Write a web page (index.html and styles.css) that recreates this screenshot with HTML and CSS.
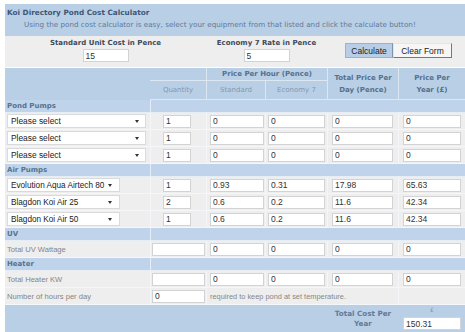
FILE: index.html
```html
<!DOCTYPE html>
<html>
<head>
<meta charset="utf-8">
<link rel="stylesheet" href="styles.css">
</head>
<body>
<div class="wrap">
  <div class="head">
    <div class="title">Koi Directory Pond Cost Calculator</div>
    <div class="sub">Using the pond cost calculator is easy, select your equipment from that listed and click the calculate button!</div>
  </div>
  <div class="rates">
    <div class="rate">
      <div class="rate-label">Standard Unit Cost in Pence</div>
      <input class="inp rate-inp" type="text" value="15">
    </div>
    <div class="rate">
      <div class="rate-label">Economy 7 Rate in Pence</div>
      <input class="inp rate-inp" type="text" value="5">
    </div>
    <div class="btns">
      <button class="btn btn-calc">Calculate</button><button class="btn btn-clear">Clear Form</button>
    </div>
  </div>
  <table class="calc">
    <colgroup>
      <col class="c-label"><col class="c-qty"><col class="c-std"><col class="c-eco"><col class="c-tot"><col class="c-year">
    </colgroup>
    <thead>
      <tr class="h1">
        <th rowspan="2" class="nb-r"></th>
        <th class="nb-l"></th>
        <th colspan="2" class="bold">Price Per Hour (Pence)</th>
        <th rowspan="2" class="bold">Total Price Per<br>Day (Pence)</th>
        <th rowspan="2" class="bold">Price Per<br>Year (£)</th>
      </tr>
      <tr class="h2">
        <th class="thin">Quantity</th>
        <th class="thin">Standard</th>
        <th class="thin">Economy 7</th>
      </tr>
    </thead>
    <tbody>
      <tr class="band"><td>Pond Pumps</td><td colspan="5"></td></tr>
      <tr class="row">
        <td class="lab"><div class="sel sel-wide"><span>Please select</span><i class="arrow"></i></div></td>
        <td class="qty"><input class="inp q" type="text" value="1"></td>
        <td class="std"><input class="inp" type="text" value="0"></td>
        <td class="eco"><input class="inp" type="text" value="0"></td>
        <td class="tot"><input class="inp" type="text" value="0"></td>
        <td class="yr"><input class="inp" type="text" value="0"></td>
      </tr>
      <tr class="row">
        <td class="lab"><div class="sel sel-wide"><span>Please select</span><i class="arrow"></i></div></td>
        <td class="qty"><input class="inp q" type="text" value="1"></td>
        <td class="std"><input class="inp" type="text" value="0"></td>
        <td class="eco"><input class="inp" type="text" value="0"></td>
        <td class="tot"><input class="inp" type="text" value="0"></td>
        <td class="yr"><input class="inp" type="text" value="0"></td>
      </tr>
      <tr class="row">
        <td class="lab"><div class="sel sel-wide"><span>Please select</span><i class="arrow"></i></div></td>
        <td class="qty"><input class="inp q" type="text" value="1"></td>
        <td class="std"><input class="inp" type="text" value="0"></td>
        <td class="eco"><input class="inp" type="text" value="0"></td>
        <td class="tot"><input class="inp" type="text" value="0"></td>
        <td class="yr"><input class="inp" type="text" value="0"></td>
      </tr>
      <tr class="band"><td>Air Pumps</td><td colspan="5"></td></tr>
      <tr class="row">
        <td class="lab"><div class="sel sel-narrow"><span>Evolution Aqua Airtech 80</span><i class="arrow"></i></div></td>
        <td class="qty"><input class="inp q" type="text" value="1"></td>
        <td class="std"><input class="inp" type="text" value="0.93"></td>
        <td class="eco"><input class="inp" type="text" value="0.31"></td>
        <td class="tot"><input class="inp" type="text" value="17.98"></td>
        <td class="yr"><input class="inp" type="text" value="65.63"></td>
      </tr>
      <tr class="row">
        <td class="lab"><div class="sel sel-narrow"><span>Blagdon Koi Air 25</span><i class="arrow"></i></div></td>
        <td class="qty"><input class="inp q" type="text" value="2"></td>
        <td class="std"><input class="inp" type="text" value="0.6"></td>
        <td class="eco"><input class="inp" type="text" value="0.2"></td>
        <td class="tot"><input class="inp" type="text" value="11.6"></td>
        <td class="yr"><input class="inp" type="text" value="42.34"></td>
      </tr>
      <tr class="row">
        <td class="lab"><div class="sel sel-narrow"><span>Blagdon Koi Air 50</span><i class="arrow"></i></div></td>
        <td class="qty"><input class="inp q" type="text" value="1"></td>
        <td class="std"><input class="inp" type="text" value="0.6"></td>
        <td class="eco"><input class="inp" type="text" value="0.2"></td>
        <td class="tot"><input class="inp" type="text" value="11.6"></td>
        <td class="yr"><input class="inp" type="text" value="42.34"></td>
      </tr>
      <tr class="band"><td>UV</td><td colspan="5"></td></tr>
      <tr class="row">
        <td class="lab txt">Total UV Wattage</td>
        <td class="qty wide"><input class="inp qw" type="text" value=""></td>
        <td class="std"><input class="inp" type="text" value="0"></td>
        <td class="eco"><input class="inp" type="text" value="0"></td>
        <td class="tot"><input class="inp" type="text" value="0"></td>
        <td class="yr"><input class="inp" type="text" value="0"></td>
      </tr>
      <tr class="band"><td>Heater</td><td colspan="5"></td></tr>
      <tr class="row">
        <td class="lab txt">Total Heater KW</td>
        <td class="qty wide"><input class="inp qw" type="text" value=""></td>
        <td class="std"><input class="inp" type="text" value="0"></td>
        <td class="eco"><input class="inp" type="text" value="0"></td>
        <td class="tot"><input class="inp" type="text" value="0"></td>
        <td class="yr"><input class="inp" type="text" value="0"></td>
      </tr>
      <tr class="row">
        <td class="lab txt">Number of hours per day</td>
        <td class="qty wide"><input class="inp qw" type="text" value="0"></td>
        <td colspan="3" class="note">required to keep pond at set temperature.</td>
        <td class="yr"></td>
      </tr>
      <tr class="foot">
        <td colspan="4"></td>
        <td class="total-label">Total Cost Per<br>Year</td>
        <td class="yr"><div class="pound">£</div><input class="inp" type="text" value="150.31"></td>
      </tr>
    </tbody>
  </table>
</div>
</body>
</html>
```

FILE: styles.css
```css
* { box-sizing: border-box; }
body {
  margin: 0;
  padding: 4px 0 0 5px;
  background: #ffffff;
  font-family: "DejaVu Sans", Verdana, sans-serif;
}
.wrap { width: 460px; }

.head {
  background: #b9cfe6;
  height: 32px;
  padding: 3px 0 0 2px;
}
.title {
  font-weight: bold;
  font-size: 7.3px;
  line-height: 12px;
  color: #3e5877;
}
.sub {
  font-size: 7.2px;
  line-height: 12px;
  color: #5f7a98;
  padding-left: 17px;
}

.rates {
  display: grid;
  grid-template-columns: 201px 121px 138px;
  background: #eeeeee;
  height: 32px;
  border-bottom: 1px solid #ffffff;
}
.rate {
  display: flex;
  flex-direction: column;
  align-items: center;
  padding-top: 3px;
}
.rate-label {
  font-weight: bold;
  font-size: 7px;
  line-height: 9px;
  color: #3c4b5c;
  margin-bottom: 1px;
}
.rate-inp { width: 46px; }
.btns {
  display: flex;
  justify-content: center;
  align-items: center;
  padding: 0 0 2px 5px;
}
.btn {
  font-family: "Liberation Sans", Arial, sans-serif;
  font-size: 8.5px;
  height: 15px;
  padding: 0;
  margin: 0;
  color: #222;
  cursor: pointer;
}
.btn-calc {
  width: 48px;
  background: #b8cee6;
  border: 1px solid #9cb2c8;
  border-right-color: #7f93a8;
}
.btn-clear {
  width: 59px;
  background: #f6f6f6;
  border: 1px solid #e6e6e6;
  border-right: 1px solid #777;
  border-bottom: 1px solid #777;
}

.inp {
  display: block;
  height: 13px;
  border: 1px solid #d3d3d3;
  background: #ffffff;
  font-family: "Liberation Sans", Arial, sans-serif;
  font-size: 8.5px;
  color: #333;
  padding: 0 0 0 2px;
  margin: 0;
  outline: none;
}

table.calc {
  width: 460px;
  border-collapse: separate;
  border-spacing: 0;
  table-layout: fixed;
}
.c-label { width: 145px; }
.c-qty { width: 56px; }
.c-std { width: 59px; }
.c-eco { width: 62px; }
.c-tot { width: 71px; }
.c-year { width: 67px; }

th, td {
  padding: 0;
  border-bottom: 1px solid #f4f6f9;
  border-left: 1px solid #f4f6f9;
  vertical-align: middle;
}
th:first-child, td:first-child { border-left: none; }

thead th {
  background: #b9cfe6;
  color: #566f8c;
  font-size: 7px;
  text-align: center;
  border-color: #dde7f2;
}
thead th.bold { font-weight: bold; line-height: 12px; }
thead th.thin { font-weight: normal; color: #8298b0; }
thead th.nb-r { border-bottom: none; }
thead th.nb-l { border-left: none; }
.h1 th { height: 12px; }
.h2 th { height: 19px; }
.h1 th.nb-l { border-bottom: 1px solid #dde7f2; }

tr.band td {
  background: #bfd4ea;
  height: 13px;
  font-weight: bold;
  font-size: 7px;
  color: #58728f;
  padding-left: 2px;
  border-color: #e6edf5;
}
tr.row td {
  background: #eeeeee;
  height: 17px;
}
td.lab { padding-left: 2px; }
td.txt {
  font-family: "Liberation Sans", Arial, sans-serif;
  font-size: 7.6px;
  color: #858585;
}
td.qty .q { width: 28px; margin-left: 12px; }
td.qty.wide { padding-left: 1px; }
td.qty .qw { width: 53px; }
td.std { padding-left: 3px; }
td.std .inp { width: 54px; }
td.eco { padding-left: 2px; }
td.eco .inp { width: 57px; }
td.tot { padding-left: 4px; }
td.tot .inp { width: 61px; }
td.yr { padding-left: 4px; }
td.yr .inp { width: 58px; }
td.note {
  font-family: "Liberation Sans", Arial, sans-serif;
  font-size: 7.4px;
  color: #868686;
  padding-left: 3px;
}

.sel {
  display: flex;
  align-items: center;
  justify-content: space-between;
  gap: 3px;
  height: 14px;
  background: #ffffff;
  border: 1px solid #dadada;
  font-family: "Liberation Sans", Arial, sans-serif;
  font-size: 8.4px;
  color: #222;
  padding: 0 6px 0 3px;
  white-space: nowrap;
}
.sel-wide { width: 139px; }
.sel-narrow { width: 113px; padding-right: 7px; }
.sel-narrow span { font-size: 8.2px; }
.arrow {
  flex: none;
  width: 0;
  height: 0;
  border-left: 2.5px solid transparent;
  border-right: 2.5px solid transparent;
  border-top: 3px solid #333;
}

tr.foot td {
  background: #b9cfe6;
  height: 28px;
  border-bottom: none;
  border-color: #b9cfe6;
}
td.total-label {
  font-weight: bold;
  font-size: 7.2px;
  line-height: 10px;
  color: #637b96;
  text-align: center;
}
tr.foot td.yr { vertical-align: top; }
.pound {
  font-size: 6px;
  line-height: 10px;
  color: #8298b0;
  text-align: center;
  width: 58px;
  margin-bottom: 2px;
}
```
